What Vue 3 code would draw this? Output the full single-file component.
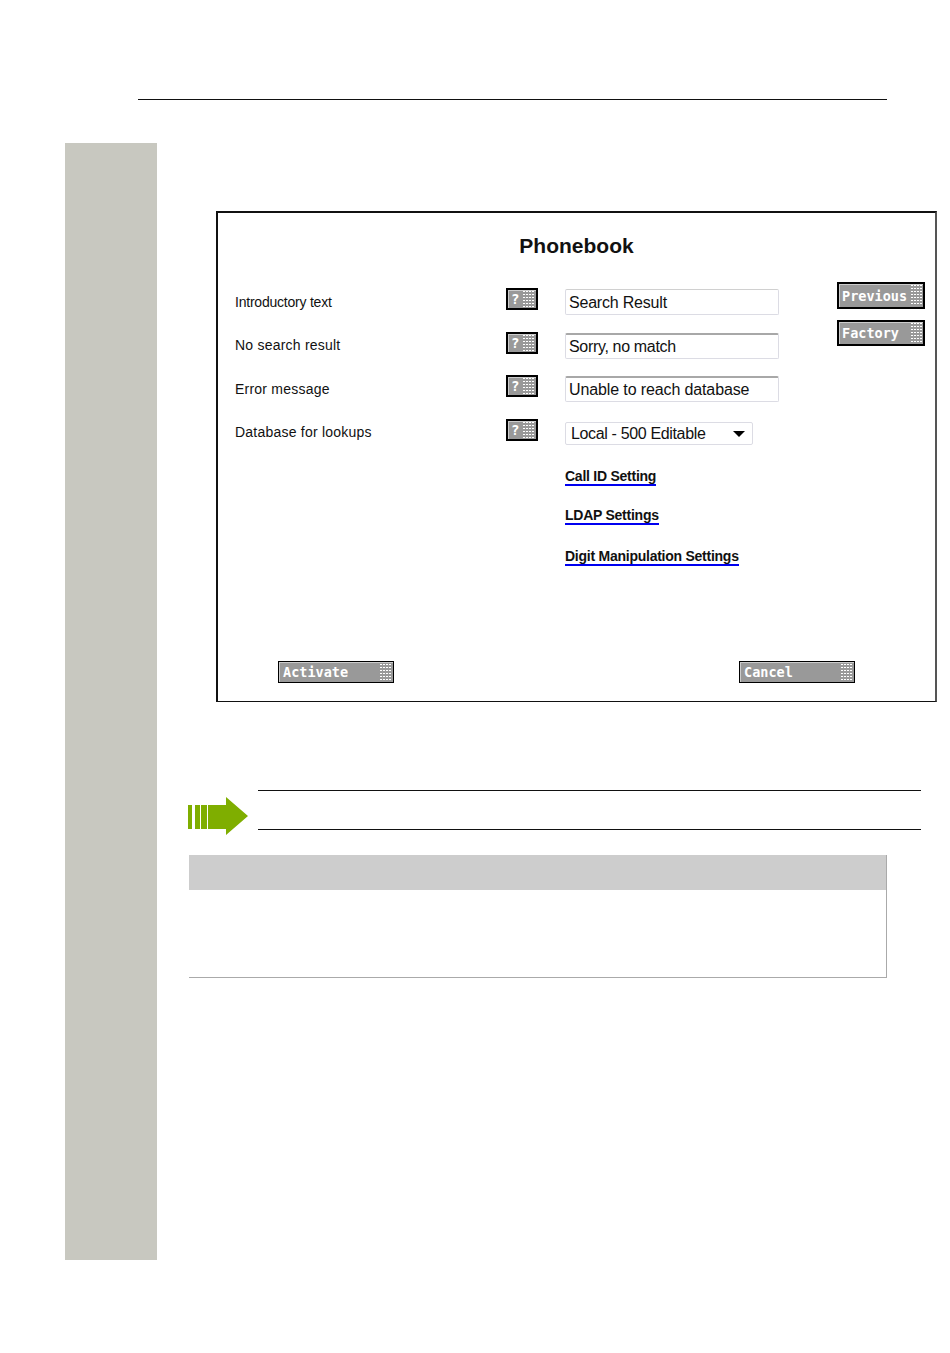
<script setup>
const rows = [
  { label: 'Introductory text', value: 'Search Result' },
  { label: 'No search result', value: 'Sorry, no match' },
  { label: 'Error message', value: 'Unable to reach database' },
];
const links = ['Call ID Setting', 'LDAP Settings', 'Digit Manipulation Settings'];
</script>

<template>
  <div class="page">
    <div class="rule"></div>
    <div class="main">
      <aside class="side"></aside>
      <div class="content">
        <section class="frame">
          <h1 class="title">Phonebook</h1>
          <div class="body">
            <div class="form">
              <div v-for="r in rows" :key="r.label" class="row">
                <span class="label">{{ r.label }}</span>
                <span class="help"><b>?</b><i class="dots"></i></span>
                <span class="spacer"></span>
                <span class="input">{{ r.value }}</span>
              </div>
              <div class="row">
                <span class="label">Database for lookups</span>
                <span class="help"><b>?</b><i class="dots"></i></span>
                <span class="spacer"></span>
                <span class="select">Local - 500 Editable<i class="caret"></i></span>
              </div>
              <nav class="links">
                <a v-for="l in links" :key="l" class="link">{{ l }}</a>
              </nav>
            </div>
            <div class="sidebtns">
              <span class="btn tall">Previous<i class="dots"></i></span>
              <span class="btn tall">Factory<i class="dots"></i></span>
            </div>
          </div>
          <div class="footer">
            <span class="btn wide">Activate<i class="dots"></i></span>
            <span class="btn wide">Cancel<i class="dots"></i></span>
          </div>
        </section>
        <div class="note">
          <svg class="arrow" width="60" height="38" viewBox="0 0 60 38">
            <rect x="0" y="8" width="4" height="24" fill="#7fae00" />
            <rect x="7" y="8" width="5" height="24" fill="#7fae00" />
            <rect x="13" y="8" width="6" height="24" fill="#7fae00" />
            <path d="M20 8H38V0L60 19 38 38V32H20Z" fill="#7fae00" />
          </svg>
          <div class="noteline"></div>
        </div>
        <div class="table">
          <div class="thead"></div>
        </div>
      </div>
    </div>
  </div>
</template>

<style scoped>
.page { width: 950px; height: 1353px; background: #fff; overflow: hidden; font-family: "Liberation Sans", Arial, sans-serif; color: #111; }
.rule { margin-left: 138px; width: 749px; height: 99px; border-bottom: 1px solid #111; }
.main { display: flex; margin-top: 43px; margin-left: 65px; }
.side { width: 92px; height: 1117px; background: #c8c8c0; flex: none; }
.content { padding: 68px 0 0 59px; }
.frame { box-sizing: border-box; width: 721px; height: 491px; border: 2px solid #111; border-right-color: #555; border-bottom-width: 1px; display: flex; flex-direction: column; padding: 0 0 18px 17px; }
.title { margin: 21px 0 0 -17px; font-size: 21px; line-height: 24px; font-weight: 700; text-align: center; color: #111; }
.body { display: flex; margin-top: 31px; }
.form { width: 544px; flex: none; }
.row { display: grid; grid-template-columns: 271px 32px 27px 214px; height: 26px; margin-bottom: 17.5px; align-items: center; }
.label { font-size: 14px; letter-spacing: .22px; }
.row:first-child .label { letter-spacing: -.22px; }
.row:nth-child(even) .label { margin-top: -2px; }
.help { box-sizing: border-box; width: 32px; height: 22px; align-self: start; margin-top: -1px; border: 2px solid #000; background: #999; box-shadow: inset 1px 1px 0 #ccc; display: flex; align-items: center; padding: 0 1px 0 3px; gap: 4px; }
.help b { font-family: "DejaVu Sans Mono", monospace; font-size: 14px; color: #fff; line-height: 1; }
.help .dots { width: 11px; height: 16px; }
.dots { display: block; flex: none; background: conic-gradient(at 2px 1px, transparent 75%, #fff 0) 0 0 / 3px 3px; }
.input { box-sizing: border-box; height: 26px; border: 1px solid #dcdce4; border-top: 2px solid #a8a8a8; border-radius: 2px; padding-left: 3px; font-size: 16px; line-height: 24px; letter-spacing: -.12px; white-space: nowrap; }
.row:first-child .input { border-top: 1px solid #d0d0d0; line-height: 25px; letter-spacing: -.2px; }
.row:nth-child(2) .input { letter-spacing: -.33px; }
.select { box-sizing: border-box; width: 188px; height: 23px; margin-top: 2px; border: 1px solid #dcdce4; border-radius: 2px; padding-left: 5px; font-size: 16px; line-height: 21px; letter-spacing: -.35px; display: flex; justify-content: space-between; align-items: center; white-space: nowrap; }
.caret { width: 0; height: 0; border-left: 6px solid transparent; border-right: 6px solid transparent; border-top: 6px solid #000; margin-right: 7px; }
.links { margin: 23.5px 0 0 330px; display: flex; flex-direction: column; align-items: flex-start; gap: 22px; }
.link { font-size: 14px; line-height: 15px; font-weight: 700; color: #111; border-bottom: 2px solid #0000f0; letter-spacing: -0.25px; white-space: nowrap; }
.link:last-child { margin-top: 2px; }
.sidebtns { margin: -7px 0 0 58px; display: flex; flex-direction: column; gap: 11px; }
.btn { box-sizing: border-box; display: flex; align-items: center; justify-content: space-between; background: #999; color: #fff; border: 2px solid #000; font-family: "DejaVu Sans Mono", monospace; font-weight: 700; font-size: 13.5px; white-space: nowrap; box-shadow: inset 1px 1px 0 #ccc; padding: 0 1px 0 3px; }
.tall { width: 88px; height: 27px; }
.tall:last-child { height: 26px; }
.tall .dots { width: 11px; height: 21px; }
.wide { width: 116px; height: 22px; border-width: 1px; padding: 0 2px 0 4px; }
.wide .dots { width: 11px; height: 16px; }
.footer { margin-top: auto; margin-left: 43px; width: 577px; display: flex; justify-content: space-between; }
.note { display: flex; align-items: flex-start; margin-top: 88px; margin-left: -28px; }
.arrow { flex: none; margin-top: 7px; }
.noteline { box-sizing: border-box; width: 663px; height: 40px; margin-left: 10px; border-top: 1px solid #111; border-bottom: 1px solid #111; }
.table { box-sizing: border-box; width: 698px; height: 123px; margin-top: 20px; margin-left: -27px; border-right: 1px solid #aaa; border-bottom: 1px solid #aaa; }
.thead { height: 35px; background: #cdcdcd; }
</style>
